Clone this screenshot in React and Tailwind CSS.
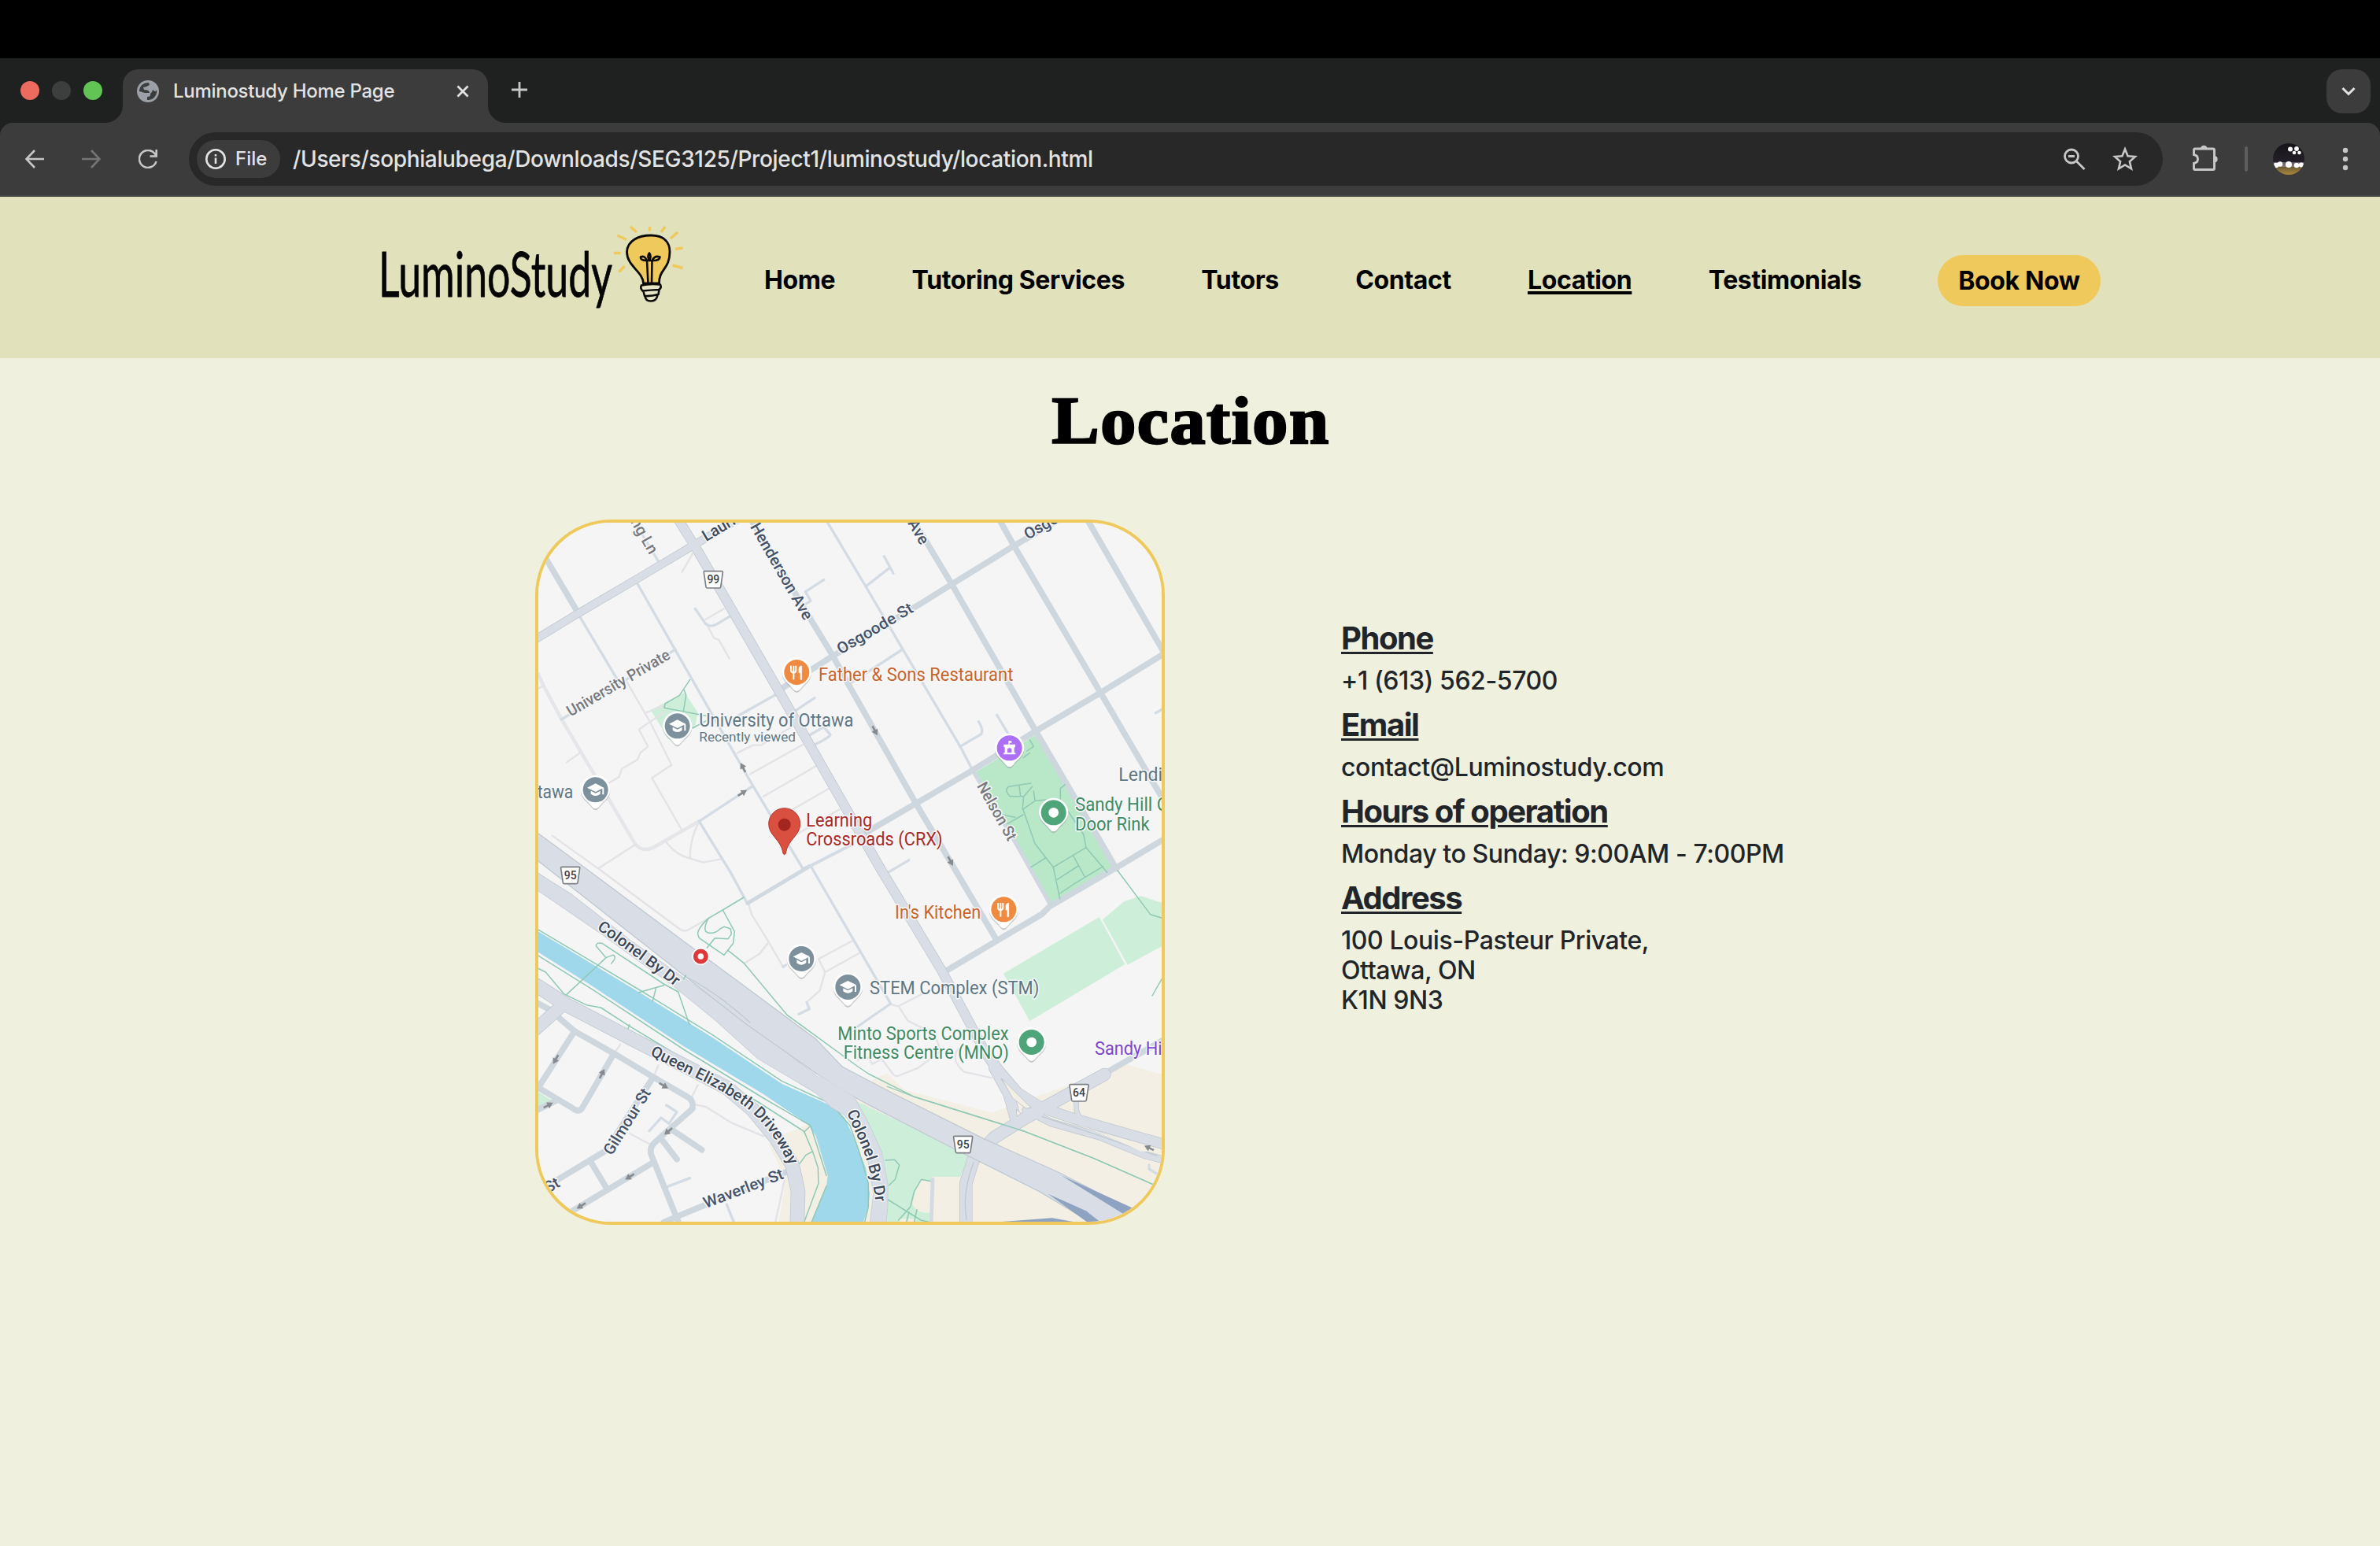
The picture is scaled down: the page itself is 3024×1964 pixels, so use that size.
import React from "react";

const GRAD = "M-32 -8 L0 -24 L32 -8 L0 8 Z M-18 4 L0 13 L18 4 V16 Q0 30 -18 16 Z M26 -6 H32 V18 H26 Z";

function Pin({ x, y, color, kind }) {
  return (
    <g transform={`translate(${x} ${y})`}>
      <path d="M-56 0 A56 56 0 1 1 56 0 C56 30 30 42 14 64 Q0 82 -14 64 C-30 42 -56 30 -56 0Z" fill="#8b9096" opacity="0.45" transform="translate(0 5)" />
      <path d="M-56 0 A56 56 0 1 1 56 0 C56 30 30 42 14 64 Q0 80 -14 64 C-30 42 -56 30 -56 0Z" fill="#fff" />
      <circle r="48" fill={color} />
      {kind === "school" && <path d={GRAD} fill="#fff" />}
      {kind === "dot" && <circle r="19" fill="#fff" />}
      {kind === "food" && (
        <g fill="none" stroke="#fff" strokeWidth="6">
          <path d="M-22 -25 V-8 Q-22 2 -12 2 Q-3 2 -3 -8 V-25 M-12 -25 V28" />
          <path d="M8 2 V-10 Q8 -24 19 -24 V28 H14 V2 Z" fill="#fff" strokeWidth="2" />
        </g>
      )}
      {kind === "castle" && (
        <g fill="#fff">
          <path d="M-23 18 H23 V24 H-23 Z M-18 -6 H-8 V18 H-18 Z M8 -6 H18 V18 H8 Z M-22 -14 H22 V-3 H-22 Z M-9 -4 H9 V4 Q5 0 0 0 Q-5 0 -9 4 Z M-4 -28 H0 V-13 H-4 Z M-2 -27 H8 V-20 H-2 Z" />
        </g>
      )}
    </g>
  );
}

function Shield({ x, y, n }) {
  return (
    <g transform={`translate(${x} ${y})`}>
      <path d="M-32 -32 H32 Q37 -32 36 -27 L28 28 Q27 32 23 32 H-23 Q-27 32 -28 28 L-36 -27 Q-37 -32 -32 -32Z" fill="#fff" stroke="#7b7f84" strokeWidth="5" />
      <text y="15" textAnchor="middle" fontSize="42" fontWeight="500" fill="#3b3e42">{n}</text>
    </g>
  );
}

const major = [
  ["M0 506 L190 390 L420 255 L630 130 L860 -5", 32],
  ["M560 5 L650 150 L980 720 L1340 1350 L1580 1750 L1740 2050 L1800 2130", 38],
  ["M1740 2050 L1780 2110 L1870 2215 L1960 2272 L2080 2312 L2300 2375 L2460 2420", 42],
  ["M1780 2120 L1835 2220 L1860 2310", 44],
  ["M1900 2280 L2000 2330 L2180 2380 L2350 2450 L2460 2480", 30],
  ["M2092 2240 L2094 2285 L2112 2325", 20],
  ["M2200 2145 L1990 2260 L1900 2310 L1780 2385 L1700 2470 L1672 2560 V2740", 50],
  ["M-20 1775 L42 1810 L150 1880 L400 2010 L600 2112 L760 2195 L860 2280 L950 2390 L1010 2490 L1032 2590 L1028 2730", 56],
  ["M0 2000 L130 1885", 50],
];

const HIGHWAY = "M30 1218 L210 1350 L600 1640 L830 1810 L1100 2010 L1200 2115 L1400 2220 L1740 2390 L2030 2520 L2300 2660 L2400 2710 H2150 L1950 2590 L1630 2430 L1300 2260 L1200 2205 L1100 2140 L830 1950 L600 1770 L180 1440 L30 1322Z";
const COLONEL = "M30 1372 L170 1460 L400 1640 L600 1780 L830 1940 L1140 2180 L1250 2240 L1300 2330 L1350 2440 L1373 2560 V2650 L1365 2720 H1305 L1320 2600 L1300 2480 L1270 2380 L1210 2300 L1160 2270 L1100 2215 L880 2085 L720 1940 L560 1810 L270 1600 L30 1436Z";

const streets = [
  "M60 160 L190 380",
  "M835 0 L1080 410 L1165 550 L1225 660 L1480 1110 L1640 1380 L1790 1635",
  "M1455 5 L1620 280 L1940 840 L2245 1360",
  "M1785 5 L1855 130 L2185 690 L2440 1125",
  "M2120 5 L2440 560",
  "M960 680 L1165 550 L1500 350 L1620 275 L1855 130 L2080 0",
  "M2440 533 L2185 690 L1940 835 L1690 990 L1485 1110 L1270 1235",
  "M2440 1240 L2240 1360 L1990 1505 L1960 1535 L1790 1635 L1580 1760",
  "M2440 2005 L2220 2130 L1960 2275",
  "M110 1920 L180 1980 L330 2065 L480 2155 L610 2230 Q630 2240 630 2262 V2275 L540 2355 L482 2408 Q466 2425 472 2450 L575 2705",
  "M180 1980 L42 2195 L175 2275 Q195 2290 208 2275 L330 2065",
  "M30 2284 L110 2245",
  "M480 2155 L300 2435 L100 2555",
  "M240 2475 L300 2575",
  "M480 2480 L160 2672",
  "M510 2390 L570 2468",
  "M550 2355 L665 2432",
  "M520 2708 L610 2670 L990 2515",
  "M30 1868 L80 1895",
];

const lanes = [
  "M420 275 L560 520 L860 1045 L1050 1360 L1080 1350 L1260 1660 L1385 1875 L1255 1965",
  "M200 400 L340 635",
  "M440 90 L500 190",
  "M130 792 L565 525",
  "M640 370 L680 428 Q698 442 720 430 L770 400",
  "M1120 0 L1290 285 L1650 895 L1700 990",
  "M1290 285 L1380 215 M1360 170 L1395 235",
  "M1430 525 L1230 655",
  "M1650 895 L1730 848 Q1740 830 1720 800",
  "M1790 775 L1835 850",
  "M960 690 L800 780",
  "M1020 760 L1095 710",
  "M1070 855 L1130 820 L1155 850 Q1150 862 1090 890",
  "M860 1045 L655 1180 L775 1375 L840 1495",
  "M1130 260 L1060 305 L1080 340 L1060 352",
  "M1370 1378 L1455 1328",
  "M2395 767 L2430 748",
  "M535 2572 L620 2540",
  "M465 2360 L510 2310 L540 2332 L570 2288 L530 2262",
  "M760 2640 L788 2710",
  "M975 1735 L985 1728 M1035 1915 L1075 1895 L1065 1870",
  "M2370 2490 V2505 L2410 2530",
];

const walks = [
  "M380 650 L470 805 L550 965 L475 1015 L590 1215",
  "M520 740 L455 765 M520 765 L425 830 L460 895 L430 920 L420 945 L360 980 L350 1010 L310 1035",
  "M150 955 L200 920 M30 680 L60 665",
  "M95 1235 L270 1360 L580 1590 Q600 1605 620 1590 L700 1545 M270 1360 L410 1270",
  "M530 1260 Q560 1300 600 1315 L670 1337 L735 1325 M650 1190 Q620 1250 620 1320",
  "M800 920 L860 890 H890 L1000 825",
  "M850 1000 L1050 888 M900 1085 L1100 970 M950 1170 L1150 1055 M1000 1245 L1190 1135",
  "M690 440 L712 482 L730 488 L770 560 M590 230 L630 160 M680 410 L750 370",
  "M845 1500 L855 1535 L920 1640 L975 1735 L985 1728 M830 1720 L885 1685 L920 1640",
  "M1110 1705 L1240 1635 M1110 1705 L1135 1755 L1270 1680 M1135 1755 L1115 1825 L1070 1865",
  "M1385 1878 L1415 1885 L1450 1940 L1550 1990 L1575 2050 M1415 1885 L1510 1835",
  "M1260 2090 L1300 2080 L1315 2105 L1350 2085 L1395 2145 Q1405 2155 1420 2148 L1490 2120 L1570 2060",
  "M1660 2030 Q1600 2080 1665 2135 L1770 2158",
  "M355 2030 L330 2065 M500 2110 L480 2155 M650 2185 L625 2235 M640 2260 L680 2268 L780 2330 L900 2380",
  "M390 2370 L470 2412 M980 2550 L945 2710",
];

const trails = [
  "M30 1372 L80 1405 M30 1586 L440 1830 L700 1990 L970 2170 L1160 2258 L1230 2340 L1262 2430 L1300 2560 V2650 L1285 2712",
  "M30 1685 L250 1822 L600 2052 L900 2235 L1080 2340 L1140 2530 M1140 2570 L1082 2712",
  "M30 1735 L70 1755 L140 1838 L225 1880 L280 1890 L385 1958 L600 2088 L880 2250 L1055 2362 L1088 2440 L1108 2500 L1110 2560 L1055 2708",
  "M1055 2365 L1075 2345 M1088 2438 L1062 2452 L1038 2485",
  "M150 1840 L300 1700 L262 1655 Q262 1640 285 1645 L520 1800 L575 1830 L618 1955 M300 1700 L325 1690 Q345 1695 320 1722",
  "M425 1832 L520 1805 M490 1818 L478 1865 M390 1955 L380 1980",
  "M825 1470 L745 1518 L690 1550 Q648 1590 650 1610 L655 1625 L750 1690 L785 1645 L790 1600 L745 1518",
  "M690 1550 Q665 1600 690 1605 Q715 1610 735 1590 L750 1582 L775 1590 L778 1610 L765 1628 L715 1625 L685 1662",
  "M765 1672 L825 1720 L990 1918 L1260 2115 L1300 2142 L1475 2230 L1890 2360 L2160 2465 L2390 2566",
  "M620 640 L580 700 L525 732 L522 748 L680 778 M598 680 L605 700 L595 760 M630 825 L680 798",
  "M2250 1368 L2375 1535 L2430 1552 M2430 1760 L2382 1845",
  "M1920 1035 L1835 1048 Q1815 1060 1840 1085 H1892 L1925 1048 M1875 1045 L1880 1085 M1892 1085 L1888 1130 L1935 1265 L2005 1355 L2130 1280 L2120 1230 L2060 1140",
  "M1930 1065 L1935 1102 L1888 1135 M1935 1102 L1980 1098 M1810 1155 L1860 1165 M1830 1190 L1890 1155 M2032 1110 V1055 L2050 1040",
  "M1915 870 L1930 895 L1905 912 M1890 938 L1915 920",
  "M2130 1280 L2210 1375 M2080 1310 L2125 1392 M2005 1355 L2030 1475 M1920 1355 L1975 1320 M2020 1402 L2100 1350 M2030 1455 L2090 1415 L2195 1352",
  "M1365 2472 L1400 2470 L1418 2490 L1402 2545 L1378 2568 M1375 2622 L1500 2700 L1535 2708",
  "M1540 2552 L1502 2545 L1475 2590 L1460 2650 L1415 2700 M1455 2670 L1445 2708 M1485 2660 L1475 2706",
];

const arrows = [
  [822, 975, -118], [820, 1072, -32], [1325, 835, 62], [1613, 1332, 62],
  [108, 2088, 120], [285, 2142, -62], [520, 2188, 32], [80, 2262, -28],
  [537, 2362, 140], [390, 2535, 148], [205, 2646, 148], [2370, 2425, -155],
];

const labels = [
  { x: 1110, y: 644, len: 742, c: "#c9642a", t: "Father & Sons Restaurant" },
  { x: 655, y: 818, len: 588, c: "#5f7683", t: "University of Ottawa" },
  { x: 655, y: 875, len: 368, c: "#5f7683", t: "Recently viewed", s: 51 },
  { x: 175, y: 1093, c: "#5f7683", t: "tawa", a: "end", len: 137 },
  { x: 1063, y: 1201, len: 252, c: "#a82a26", t: "Learning" },
  { x: 1063, y: 1272, len: 520, c: "#a82a26", t: "Crossroads (CRX)" },
  { x: 2254, y: 1026, c: "#5f7683", t: "Lendin" },
  { x: 2088, y: 1141, c: "#3f8b63", t: "Sandy Hill O", len: 357 },
  { x: 2088, y: 1214, len: 284, c: "#3f8b63", t: "Door Rink" },
  { x: 1401, y: 1550, len: 328, c: "#c9642a", t: "In's Kitchen" },
  { x: 1305, y: 1840, len: 646, c: "#5f7683", t: "STEM Complex (STM)" },
  { x: 1183, y: 2014, len: 652, c: "#3f8b63", t: "Minto Sports Complex" },
  { x: 1205, y: 2084, len: 631, c: "#3f8b63", t: "Fitness Centre (MNO)" },
  { x: 2163, y: 2070, c: "#7d45cf", t: "Sandy Hi", len: 257 },
];

const streetLabels = [
  { x: 165, y: 782, r: -30.3, len: 445, c: "#77797e", t: "University Private" },
  { x: 1195, y: 545, r: -30.5, len: 325, c: "#46536b", t: "Osgoode St" },
  { x: 1908, y: 108, r: -30, c: "#46536b", t: "Osgoode St" },
  { x: 682, y: 115, r: -31, c: "#3c485a", t: "Laurier Ave" },
  { x: 848, y: 57, r: 60, len: 416, c: "#46536b", t: "Henderson Ave" },
  { x: 1499, y: 130, r: 60, c: "#46536b", t: "Ave", a: "end" },
  { x: 466, y: 166, r: 60, c: "#77797e", t: "ng Ln", a: "end" },
  { x: 1712, y: 1045, r: 60.5, len: 245, c: "#77797e", t: "Nelson St" },
  { x: 322, y: 2456, r: -58, len: 285, c: "#46536b", t: "Gilmour St" },
  { x: 680, y: 2656, r: -21, len: 322, c: "#46536b", t: "Waverley St" },
  { x: 128, y: 2570, r: -30, c: "#46536b", t: "St", a: "end" },
];

function MapArt() {
  return (
    <svg viewBox="42 42 2376 2664" className="block h-full w-full" fontFamily="Roboto, sans-serif">
      <rect x="42" y="42" width="2376" height="2664" fill="#f5f5f5" />
      <path d="M1310 2170 L1370 2140 L1440 2205 L1770 2290 L1940 2230 L2280 2105 L2420 2145 V2710 H1240 V2240 Z" fill="#f4efe4" />
      <path d="M985 2370 L1070 2335 L1160 2300 L1320 2600 V2710 H958 L985 2550 L920 2410Z" fill="#f4efe4" />
      <path d="M1240 2240 L1690 2450 L1650 2535 H1545 L1535 2710 H1365 L1375 2560 L1340 2430Z" fill="#cdefd9" />
      <path d="M1540 2550 L1500 2548 Q1478 2580 1468 2640 Q1490 2680 1540 2670Z M1420 2695 h60 v15 h-60z" fill="#f4efe4" />
      <g fill="#cdefd9">
        <path d="M1815 1760 L2180 1545 L2278 1725 L1915 1942Z" />
        <path d="M2193 1555 L2275 1485 L2340 1465 L2430 1495 V1650 L2288 1727Z" />
        <path d="M470 755 L600 690 L650 765 L640 820 L540 870Z" />
        <path d="M42 2212 L95 2245 L42 2278Z" />
      </g>
      <path d="M1705 995 L1940 850 L2240 1355 L1995 1495Z" fill="#b8e8c7" />
      <path d="M30 1593 L440 1840 L700 2000 L970 2180 L1160 2265 L1210 2310 L1250 2400 L1290 2500 L1305 2600 L1300 2650 L1280 2710 H1080 L1140 2570 L1145 2530 L1100 2380 L1070 2335 L900 2220 L600 2040 L250 1810 L30 1672Z" fill="#9fd8eb" />
      <g fill="none" strokeLinejoin="round" strokeLinecap="round">
        <path d="M42 620 L60 660 L130 790 L260 1010 L410 1265 Q440 1300 480 1280 L655 1180" stroke="#e5e6e9" strokeWidth="14" />
        <g stroke="#e3e3e7" strokeWidth="7">{walks.map((d) => <path key={d} d={d} />)}</g>
        <g stroke="#d3dbe4" strokeWidth="10">{lanes.map((d) => <path key={d} d={d} />)}</g>
        <path d="M840 1492 L1075 1352" stroke="#d0d8e0" strokeWidth="15" />
        <path d="M1075 1352 L1235 1270" stroke="#d3dbe4" strokeWidth="12" />
        <path d="M1700 990 L1860 1260 L1995 1500" stroke="#cfd7e0" strokeWidth="15" />
        <g stroke="#ced7de" strokeWidth="23">{streets.map((d) => <path key={d} d={d} />)}</g>
        <g stroke="#8fc9b5" strokeWidth="4.500">{trails.map((d) => <path key={d} d={d} />)}</g>
        <path d="M1545 2545 L1540 2710" stroke="#d3dae1" strokeWidth="14" />
        <g stroke="#c0c9d1">{major.map(([d, w]) => <path key={d} d={d} strokeWidth={w} />)}</g>
        <path d={COLONEL} stroke="#c0c9d1" strokeWidth="4" />
        <g stroke="#d9dee6">{major.map(([d, w]) => <path key={d} d={d} strokeWidth={w - 5} />)}</g>
      </g>
      <path d={COLONEL} fill="#d9dee6" />
      <path d={HIGHWAY} fill="#d9dee6" stroke="#c0c9d1" strokeWidth="4" />
      <path d="M1105 2143 L1200 2203 L1245 2230 L1225 2290 L1150 2240Z" fill="#d9dee6" />
      <g fill="none" stroke="#c0c9d1" strokeWidth="4">
        <path d="M600 1770 Q720 1830 850 1948" />
        <path d="M1805 2160 Q1850 2230 1915 2275 M1960 2305 Q2180 2375 2400 2455" />
        <path d="M1702 2478 Q1655 2600 1675 2700" />
      </g>
      <path d="M1864 2278 L1882 2293 L1866 2306Z M1808 2160 L1920 2272 L1900 2274 L1850 2235Z" fill="#f4efe4" stroke="#c0c9d1" strokeWidth="3" />
      <path d="M2010 2302 L2380 2440 L2340 2438 Q2180 2365 2010 2302Z" fill="#f4efe4" />
      <g fill="#8ea3c2">
        <path d="M2035 2530 L2310 2655 L2270 2675Z" />
        <path d="M1985 2600 L2130 2665 L2190 2712 H2140Z" />
        <path d="M1810 2706 L2000 2692 L2080 2706Z" />
      </g>
      <path d="M1370 2190 L1475 2230 L1890 2360 L2160 2465 L2390 2566 M595 1783 L605 1765" fill="none" stroke="#8fc9b5" strokeWidth="4" />
      {arrows.map(([x, y, r]) => (
        <path key={`${x}-${y}`} transform={`translate(${x} ${y}) rotate(${r})`} d="M-20 -4 H-2 V-13 L20 0 L-2 13 V4 H-20Z" fill="#878b8f" />
      ))}
      <Shield x={709} y={259} n="99" />
      <Shield x={164} y={1386} n="95" />
      <Shield x={1661} y={2412} n="95" />
      <Shield x={2103} y={2215} n="64" />
      <g stroke="#f7f8f9" strokeWidth="9" strokeLinejoin="round" style={{ paintOrder: "stroke" }}>
        {labels.map((l) => (
          <text key={l.t} x={l.x} y={l.y} fill={l.c} fontSize={l.s || 69} textAnchor={l.a} textLength={l.len} lengthAdjust="spacingAndGlyphs">{l.t}</text>
        ))}
        <g fontWeight="500">
          {streetLabels.map((l) => (
            <text key={`${l.t}${l.x}`} transform={`translate(${l.x} ${l.y}) rotate(${l.r})`} fill={l.c} fontSize="60" textAnchor={l.a} textLength={l.len} lengthAdjust="spacingAndGlyphs">{l.t}</text>
          ))}
          <path id="colonel-a" d="M264 1590 Q422 1700 600 1838" fill="none" stroke="none" />
          <path id="colonel-b" d="M1218 2288 C1254 2388 1318 2466 1334 2700" fill="none" stroke="none" />
          <path id="queen" d="M466 2071 C636 2156 700 2180 790 2240 C900 2310 960 2400 1020 2540" fill="none" stroke="none" />
          <g fontSize="60" fill="#3c485a">
            <text><textPath href="#colonel-a" textLength="372" lengthAdjust="spacingAndGlyphs">Colonel By Dr</textPath></text>
            <text><textPath href="#colonel-b" textLength="362" lengthAdjust="spacingAndGlyphs">Colonel By Dr</textPath></text>
            <text><textPath href="#queen" textLength="698" lengthAdjust="spacingAndGlyphs">Queen Elizabeth Driveway</textPath></text>
          </g>
        </g>
      </g>
      <Pin x={1027} y={612} color="#ef8b41" kind="food" />
      <Pin x={1816} y={1516} color="#ef8b41" kind="food" />
      <Pin x={572} y={817} color="#7d919d" kind="school" />
      <Pin x={260} y={1060} color="#7d919d" kind="school" />
      <Pin x={1045} y={1704} color="#7d919d" kind="school" />
      <Pin x={1222} y={1812} color="#7d919d" kind="school" />
      <Pin x={2006} y={1147} color="#4fa57a" kind="dot" />
      <Pin x={1922} y={2022} color="#4fa57a" kind="dot" />
      <Pin x={1838} y={901} color="#ac6ff5" kind="castle" />
      <path d="M920 1190 A60 60 0 1 1 1040 1190 C1040 1235 992 1250 985 1302 Q980 1312 975 1302 C968 1250 920 1235 920 1190Z" fill="#d94f40" stroke="#b43a31" strokeWidth="3" />
      <circle cx="980" cy="1193" r="24" fill="#a2261f" />
      <circle cx="661" cy="1695" r="33" fill="#fff" />
      <circle cx="661" cy="1695" r="20" fill="#fff" stroke="#dc3a3a" strokeWidth="17" />
    </svg>
  );
}

function Logo() {
  return (
    <svg viewBox="480 284 392 116" className="h-[116px] w-[392px] shrink-0">
      <text x="481" y="377" fontFamily="Lato, sans-serif" fontSize="79" textLength="297" lengthAdjust="spacingAndGlyphs" fill="#050505" stroke="#050505" strokeWidth="0.800" strokeLinejoin="round">LuminoStudy</text>
      <g stroke="#f0c95c" strokeWidth="3.400" strokeLinecap="butt">
        <path d="M801 288 L809 295 M825.500 288 V293.500 M845 288 L840 295 M784.500 299 L796 304.500 M861 295 L852 303 M867.500 315 L858 316.500 M780 321.500 H788.500 M854.500 337 L867.500 340.500 M793.500 338 L786.500 345.500" />
      </g>
      <path d="M817.500 360 C817 345 796.500 338 796.500 320 C797 306 811 299 827 299 C844 299 851 308 851 320 C851 342 837 342 837.500 360Z" fill="#f0c95c" stroke="#0a0a0a" strokeWidth="2.800" />
      <g fill="none" stroke="#0a0a0a" strokeWidth="2.600" strokeLinecap="round" strokeLinejoin="round">
        <path d="M823.500 360 L822 331 Q813.500 331 814 326.500 Q819 324 822 331 L828.500 331 Q832 324 838.500 326.500 Q838 331.500 828.500 331 L828 360 M825 331 Q822 325 825 321.500 Q828 325 825 331" />
        <path d="M815 362.500 Q826 360 839 361.500 Q841 366 837 368 Q826 368.500 816.500 369.500 Q813 366 815 362.500Z M817.500 370 L819 376 Q828 376.500 836.500 374 L837.500 368.500 M819.500 376 Q820 382.500 827 382.500 Q834 382.500 835.500 375" fill="#e9e6c8" />
      </g>
    </svg>
  );
}

const nav = ["Home", "Tutoring Services", "Tutors", "Contact", "Location", "Testimonials"];

function BrowserChrome() {
  return (
    <div>
      <div className="h-[74px] bg-black" />
      <div className="flex h-[82px] bg-[#1f2121]">
        <div className="flex h-full items-center gap-4 pl-[26px]">
          <span className="size-6 rounded-full bg-[#ed6a5e]" />
          <span className="size-6 rounded-full bg-[#3d3f3f]" />
          <span className="size-6 rounded-full bg-[#61c454]" />
        </div>
        <div className="ml-1 w-[22px] self-end bg-[#3c3c3c]"><div className="h-[22px] rounded-br-[22px] bg-[#1f2121]" /></div>
        <div className="flex h-[68px] w-[464px] items-center self-end rounded-t-[20px] bg-[#3c3c3c] pb-3 pl-[18px] pr-6">
          <svg viewBox="0 0 28 28" className="size-7 shrink-0">
            <circle cx="14" cy="14" r="14" fill="#9aa0a6" />
            <path d="M15 3 L16 6 L12 8 L8 9 L9 12 Q16 12 16 16 H10 Q4 14 3 14 A11 11 0 0 1 15 3Z M20 12 Q24 16 25 12 A11 11 0 0 1 13 25 V21 Q18 21 17 17 L19 15Z" fill="#3c3c3c" />
          </svg>
          <span className="ml-[18px] grow whitespace-nowrap text-[24px] font-[450] tracking-[-0.28px] text-[#e3e3e3]">Luminostudy Home Page</span>
          <svg viewBox="0 0 16 16" className="size-4 shrink-0"><path d="M1.500 1.500 L14.500 14.500 M14.500 1.500 L1.500 14.500" stroke="#e3e3e3" strokeWidth="2.800" /></svg>
        </div>
        <div className="w-[22px] self-end bg-[#3c3c3c]"><div className="h-[22px] rounded-bl-[22px] bg-[#1f2121]" /></div>
        <svg viewBox="0 0 20 20" className="ml-2 mt-[30px] size-5"><path d="M10 0 V20 M0 10 H20" stroke="#c7c7c7" strokeWidth="2.800" /></svg>
        <div className="ml-auto mr-3 mt-[14px] flex size-14 items-center justify-center rounded-[20px] bg-[#3c3c3c]">
          <svg viewBox="0 0 18 12" className="h-3 w-[18px]"><path d="M1.500 2 L9 9.500 L16.500 2" fill="none" stroke="#e3e3e3" strokeWidth="3" /></svg>
        </div>
      </div>
      <div className="bg-[#1f2121]">
        <div className="flex h-[94px] items-center rounded-t-[16px] border-b-2 border-[#484848] bg-[#3c3c3c] pl-8">
          <svg viewBox="0 0 24 24" className="size-6"><path d="M24 12 H2 M12 1 L1.500 12 L12 23" fill="none" stroke="#c7c7c7" strokeWidth="2.600" /></svg>
          <svg viewBox="0 0 24 24" className="ml-12 size-6"><path d="M0 12 H22 M12 1 L22.500 12 L12 23" fill="none" stroke="#757575" strokeWidth="2.600" /></svg>
          <svg viewBox="0 0 24 24" className="ml-12 size-6"><path d="M22.500 15 A11 11 0 1 1 20.500 5 L22 7 M22.700 0 V8.500 H14.500" fill="none" stroke="#c7c7c7" strokeWidth="2.600" /></svg>
          <div className="ml-10 flex h-[68px] w-[2508px] items-center rounded-full bg-[#282828] pl-[10px] pr-8">
            <div className="flex h-12 w-[106px] items-center rounded-full bg-[#3c3c3c] pl-[11px]">
              <svg viewBox="0 0 26 26" className="size-[26px]"><circle cx="13" cy="13" r="11.700" fill="none" stroke="#e3e3e3" strokeWidth="2.600" /><path d="M13 11.500 V19 M13 7 V9.500" stroke="#e3e3e3" strokeWidth="2.600" /></svg>
              <span className="ml-3 text-[24px] font-medium text-[#e3e3e3]">File</span>
            </div>
            <span className="ml-4 grow whitespace-nowrap text-[28px] font-[450] tracking-[-0.35px] text-[#e3e3e3]">/Users/sophialubega/Downloads/SEG3125/Project1/luminostudy/location.html</span>
            <svg viewBox="0 0 28 28" className="size-7"><g fill="none" stroke="#c7c7c7" strokeWidth="2.800"><circle cx="10" cy="10.500" r="8.500" /><path d="M16 16.500 L26.500 27 M6 10.500 H14" /></g></svg>
            <svg viewBox="0 0 32 32" className="ml-[34px] size-8"><path d="M16 3.500 L19.600 12.200 L29 13 L21.900 19.200 L24 28.400 L16 23.500 L8 28.400 L10.100 19.200 L3 13 L12.400 12.200Z" fill="none" stroke="#c7c7c7" strokeWidth="2.600" /></svg>
          </div>
          <svg viewBox="0 0 34 34" className="-mt-1 ml-[36px] size-[34px]">
            <path d="M4 6 H28 Q29.500 6 29.500 7.500 V31 Q29.500 32.500 28 32.500 H5 Q3.500 32.500 3.500 31 V24.500 Q8.500 23.500 8.500 19 Q8.500 14.500 3.500 13.500 V7.500 Q3.500 6 5 6Z" fill="none" stroke="#c7c7c7" strokeWidth="2.900" />
            <path d="M12 5.500 A4.300 4.300 0 0 1 20.500 5.500Z M30 15 A4.300 4.300 0 0 1 30 23.500Z" fill="#c7c7c7" />
          </svg>
          <span className="ml-[34px] h-8 w-1 rounded-full bg-[#5e5e5e]" />
          <svg viewBox="0 0 40 40" className="ml-8 size-10">
            <defs>
              <linearGradient id="av" x1="0" y1="0" x2="0" y2="1"><stop offset="0" stopColor="#15131a" /><stop offset=".6" stopColor="#241f28" /><stop offset=".8" stopColor="#7a6536" /><stop offset="1" stopColor="#a98939" /></linearGradient>
              <clipPath id="avc"><circle cx="20" cy="20" r="20" /></clipPath>
              <filter id="avb"><feGaussianBlur stdDeviation="0.700" /></filter>
            </defs>
            <g clipPath="url(#avc)">
              <rect width="40" height="40" fill="url(#av)" />
              <g filter="url(#avb)">
                <rect y="24" width="40" height="6" fill="#cfc3e0" opacity="0.350" />
                <g fill="#fff"><circle cx="22" cy="7.500" r="3" /><circle cx="30" cy="7" r="2.900" /><circle cx="27" cy="12" r="2.300" /><circle cx="33.500" cy="12" r="2.300" /><circle cx="4" cy="28" r="3.300" /><circle cx="9" cy="26.500" r="3.300" /><circle cx="20" cy="27" r="4" /><circle cx="30" cy="28" r="3.200" /><circle cx="36" cy="27.500" r="3.100" /></g>
              </g>
            </g>
          </svg>
          <svg viewBox="0 0 8 30" className="ml-12 h-[30px] w-2 fill-[#c7c7c7]"><circle cx="4" cy="4" r="3.200" /><circle cx="4" cy="15" r="3.200" /><circle cx="4" cy="26" r="3.200" /></svg>
        </div>
      </div>
    </div>
  );
}

function Entry({ title, children }) {
  return (
    <section className="mb-[13px]">
      <h2 className="mb-[11px] text-[40px] font-bold leading-[48px] tracking-[-1.45px]">
        <span className="underline decoration-[3px] underline-offset-[3px]">{title}</span>
      </h2>
      <p className="whitespace-pre-line text-[32px] font-[450] leading-[38px] tracking-[-0.42px]">{children}</p>
    </section>
  );
}

export default function App() {
  return (
    <div className="h-[1964px] w-[3024px] overflow-hidden bg-[#eff0de] font-['Inter',sans-serif]">
      <BrowserChrome />
      <header className="flex h-[205px] bg-[#e1e1bc] pl-[480px] pt-[34px]">
        <Logo />
        <nav className="ml-[99px] mt-[39px] flex h-[66px] items-center gap-[97.3px] whitespace-nowrap text-[32px] font-bold tracking-[-0.38px] text-black">
          {nav.map((n) => (
            <a key={n} className={n === "Location" ? "underline decoration-4 underline-offset-[3px]" : ""}>{n}</a>
          ))}
          <a className="mt-px flex h-[65px] items-center rounded-full bg-[#f0c95c] px-[26px]">Book Now</a>
        </nav>
      </header>
      <main>
        <h1 className="mt-[29px] h-[100px] scale-x-[1.06] pl-[2px] text-center font-['Liberation_Serif',serif] text-[85px] font-bold leading-[100px] tracking-[1.5px] text-black [-webkit-text-stroke:2.5px_black]">Location</h1>
        <div className="mt-[76px] flex pl-[680px]">
          <div className="h-[896px] w-[800px] shrink-0 overflow-hidden rounded-[96px] border-4 border-[#f0c95c]"><MapArt /></div>
          <div className="ml-[224px] mt-[127px] text-[#212529]">
            <Entry title="Phone">+1 (613) 562-5700</Entry>
            <Entry title="Email">contact@Luminostudy.com</Entry>
            <Entry title="Hours of operation">Monday to Sunday: 9:00AM - 7:00PM</Entry>
            <Entry title="Address">{"100 Louis-Pasteur Private,\nOttawa, ON\nK1N 9N3"}</Entry>
          </div>
        </div>
      </main>
    </div>
  );
}
